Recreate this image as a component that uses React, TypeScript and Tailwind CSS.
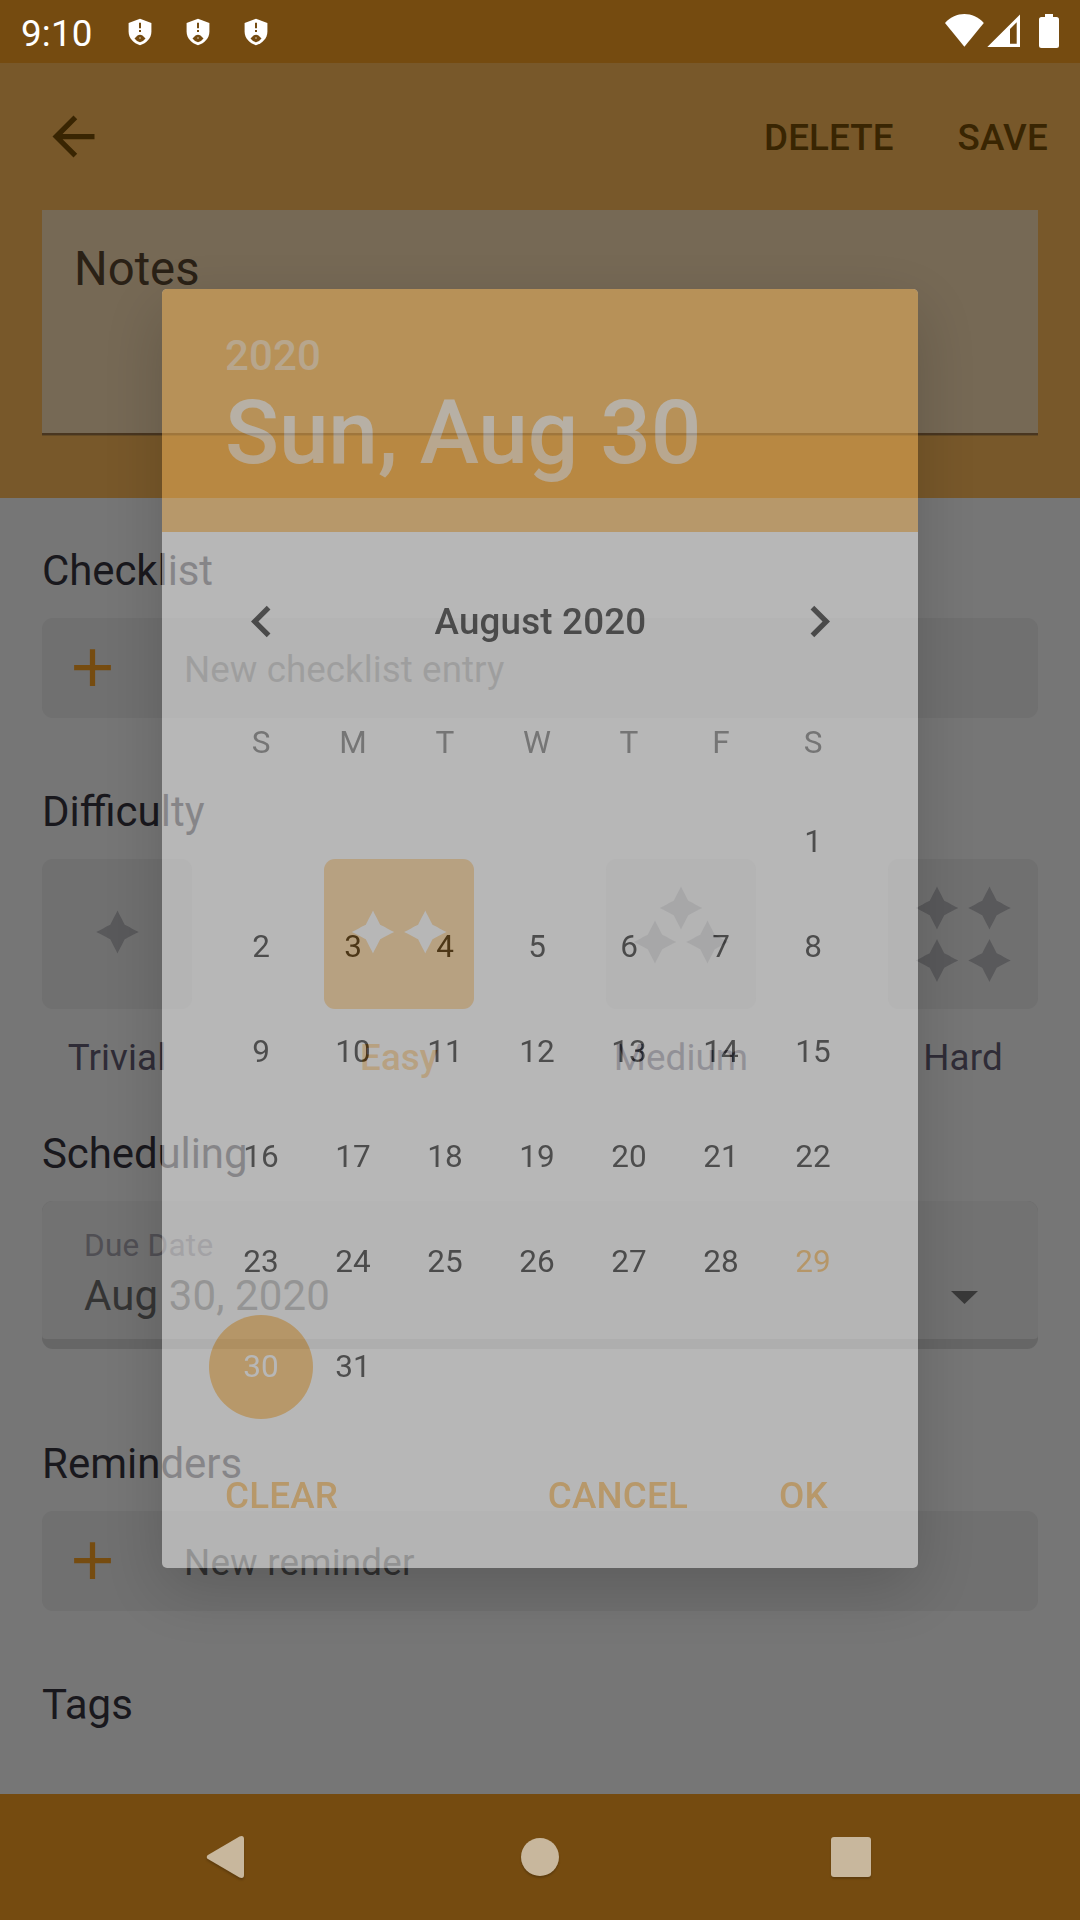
import type { ReactNode } from "react";

const STAR = "M0-21.5C1.5-18 5.5-11 7.2-7.2C11-5.5 17.5-1.6 21.2 0C17.5 1.6 11 5.5 7.2 7.2C5.5 11 1.5 18 0 21.5C-1.5 18-5.5 11-7.2 7.2C-11 5.5-17.5 1.6-21.2 0C-17.5-1.6-11-5.5-7.2-7.2C-5.5-11-1.5-18 0-21.5Z";

const difficulties = [
  { label: "Trivial", active: false, stars: [[75.5, 73]] },
  { label: "Easy", active: true, stars: [[49, 73], [101.3, 73]] },
  { label: "Medium", active: false, stars: [[75, 49], [49, 83], [101.5, 83]] },
  { label: "Hard", active: false, stars: [[49, 49], [101.5, 49], [49, 101.5], [101.5, 101.5]] },
];

const weekdays = ["S", "M", "T", "W", "T", "F", "S"];
const days: (number | null)[] = [
  ...Array.from({ length: 6 }, () => null),
  ...Array.from({ length: 31 }, (_, i) => i + 1),
];

function Shield() {
  return (
    <svg className="h-[28px] w-[24px]" viewBox="0 0 24 28">
      <path fill="#fff" d="M12 .7 23.4 5v8.8c0 6.3-4.8 11.4-11.4 13.5C5.4 25.200.6 20.100.6 13.800V5z" />
      <path fill="#754b10" d="M11 4.800h2v5.400h-2zM11 12h2v2h-2z" />
      <path fill="#754b10" d="M6.500 20.500 9.500 17.600a4.200 4.200 0 0 1 5 0l3 2.900a9 9 0 0 1-5.500 3.700 9 9 0 0 1-5.500-3.700z" />
      <circle cx="12" cy="20" r=".8" fill="#d9cbb6" />
    </svg>
  );
}

function StatusBar() {
  return (
    <div className="flex h-[63px] items-start bg-[#754b10] text-white">
      <span className="ml-[21px] mt-[12px] w-[71px] text-[36.75px] leading-[43px] tracking-[0.2px]">9:10</span>
      <div className="ml-[36px] mt-[18px] flex gap-[34px]">
        <Shield />
        <Shield />
        <Shield />
      </div>
      <svg className="ml-auto mr-[20px] mt-[12px] h-[38px] w-[116px]" viewBox="0 0 116 38" fill="#fff">
        <path d="M20.400 34.700 1 10.900C6.500 5 13.200 2 20.400 2s14 3 19.400 8.900z" />
        <path fillRule="evenodd" d="M43.300 35 76 2.500V35zM66 17v14.700h6.700V10.300z" />
        <path d="M101 2h8v3h3.500a2.500 2.500 0 0 1 2.500 2.500v26a2.500 2.500 0 0 1-2.500 2.500h-15a2.500 2.500 0 0 1-2.500-2.500v-26a2.500 2.500 0 0 1 2.500-2.500h3.500z" />
      </svg>
    </div>
  );
}

function Header() {
  return (
    <header className="h-[435px] bg-[#78582a] px-[42px] text-[#392502]">
      <div className="flex h-[147px] items-center pt-[2px]">
        <svg className="-mt-[2px] h-[63px] w-[63px]" viewBox="0 0 24 24" fill="#392502">
          <path d="M20 11H7.830l5.590-5.590L12 4l-8 8 8 8 1.410-1.410L7.830 13H20v-2z" />
        </svg>
        <span className="ml-auto text-[36.75px] font-medium leading-[43px] tracking-[0.1px]">DELETE</span>
        <span className="-mr-[10px] ml-[64px] text-[36.75px] font-medium leading-[43px] tracking-[0.2px]">SAVE</span>
      </div>
      <div className="h-[225px] border-b-2 border-[#493620] bg-[#766955] px-[32px] pt-[31px] text-[47.25px] leading-[56px] text-[#2a2116] shadow-[0_1px_0_#634a25]">
        Notes
      </div>
    </header>
  );
}

function Heading({ children, className }: { children: ReactNode; className: string }) {
  return <h2 className={`text-[42px] leading-[48px] text-[#19181d] ${className}`}>{children}</h2>;
}

function AddRow({ label, tone }: { label: string; tone: string }) {
  return (
    <div className="mt-[23px] flex h-[100px] items-center rounded-[11px] bg-[#707070]">
      <svg className="ml-[19px] -mt-[1px] h-[63px] w-[63px]" viewBox="0 0 24 24" fill="#764c10">
        <path d="M19 13h-6v6h-2v-6H5v-2h6V5h2v6h6v2z" />
      </svg>
      <span className={`ml-[60px] mt-[3px] text-[36.75px] leading-[43px] ${tone}`}>{label}</span>
    </div>
  );
}

function TaskForm() {
  return (
    <main className="flex h-[1296px] flex-col bg-[#767676] px-[42px]">
      <Heading className="mt-[49px] tracking-[-0.1px]">Checklist</Heading>
      <AddRow label="New checklist entry" tone="text-[#484848] tracking-[0.06px]" />

      <Heading className="mt-[70px]">Difficulty</Heading>
      <div className="mt-[23px] flex justify-between">
        {difficulties.map((d) => (
          <div key={d.label} className="flex w-[150px] flex-col items-center">
            <div className={`h-[150px] w-[150px] rounded-[11px] ${d.active ? "bg-[#764c10]" : "bg-[#707070]"}`}>
              <svg className="h-[150px] w-[150px]" viewBox="0 0 150 150" fill={d.active ? "#767676" : "#59595b"}>
                {d.stars.map(([x, y]) => (
                  <path key={`${x}-${y}`} d={STAR} transform={`translate(${x} ${y})`} />
                ))}
              </svg>
            </div>
            <span
              className={`mt-[27px] text-[36.75px] leading-[43px] tracking-[0.1px] ${d.active ? "font-medium text-[#764c10]" : "text-[#2f2c37]"}`}
            >
              {d.label}
            </span>
          </div>
        ))}
      </div>

      <Heading className="mt-[51px] tracking-[-0.1px]">Scheduling</Heading>
      <div className="mt-[23px] h-[148px] overflow-hidden rounded-[11px] bg-[#666666]">
        <div className="flex h-[138px] items-start justify-between rounded-b-[4px] bg-[#727272] pl-[42px] pr-[60px]">
          <div className="pt-[26px]">
            <div className="text-[31.5px] leading-[37px] text-[#504f54] tracking-[0.25px]">Due Date</div>
            <div className="mt-[8px] text-[42px] leading-[48px] text-[#343434] tracking-[0.1px]">Aug 30, 2020</div>
          </div>
          <svg className="mt-[90px] h-[13px] w-[27px]" viewBox="0 0 27 13" fill="#393939">
            <path d="M0 0h27L13.500 13z" />
          </svg>
        </div>
      </div>

      <Heading className="mt-[91px]">Reminders</Heading>
      <AddRow label="New reminder" tone="text-[#303030] tracking-[0.2px]" />

      <Heading className="mt-[70px]">Tags</Heading>
    </main>
  );
}

function NavBar() {
  return (
    <nav className="flex h-[126px] items-center bg-[#754b10] pl-[206px] pr-[209px]">
      <svg className="h-[44px] w-[40px] drop-shadow-[0_2px_1px_rgba(0,0,0,0.2)]" viewBox="0 0 40 44" fill="#c8b79d">
        <path d="M1.500 20.200 33.500 1.400Q38 0 38 4v36q0 4-4.500 2.600L1.500 23.800Q0 22 1.500 20.200z" />
      </svg>
      <div className="ml-[275px] h-[38px] w-[38px] rounded-full bg-[#c8b79d] shadow-[0_2px_2px_rgba(0,0,0,0.2)]" />
      <div className="ml-auto h-[40px] w-[40px] rounded-[3px] bg-[#c8b79d] shadow-[0_2px_2px_rgba(0,0,0,0.2)]" />
    </nav>
  );
}

function DatePicker() {
  return (
    <div
      role="dialog"
      className="absolute left-[162px] top-[289px] h-[1279px] w-[756px] rounded-[5px] bg-white text-[#212121] opacity-[0.476] shadow-[0_21px_63px_rgba(0,0,0,0.36)]"
    >
      <div className="h-[243px] rounded-t-[5px] bg-[#ffbe5d] pl-[63px] pt-[43px] font-medium">
        <div className="text-[42px] leading-[48px] text-white/70 tracking-[0.1px]">2020</div>
        <div className="mt-[1px] text-[89.25px] leading-[104px] text-white tracking-[-0.15px]">Sun, Aug 30</div>
      </div>
      <div className="mt-[58px] flex h-[63px] items-center justify-between pl-[68px] pr-[67px]">
        <svg className="h-[63px] w-[63px]" viewBox="0 0 24 24" fill="#212121">
          <path d="M15.410 7.410 14 6l-6 6 6 6 1.410-1.410L10.830 12z" />
        </svg>
        <span className="text-[36.75px] font-medium leading-[43px] tracking-[0.2px]">August 2020</span>
        <svg className="h-[63px] w-[63px]" viewBox="0 0 24 24" fill="#212121">
          <path d="M10 6 8.590 7.410 13.170 12l-4.580 4.590L10 18l6-6z" />
        </svg>
      </div>
      <div className="ml-[53px] mt-[58px] grid h-[63px] w-[644px] grid-cols-7 place-items-center text-[31.5px] text-[#757575]">
        {weekdays.map((w, i) => (
          <span key={i}>{w}</span>
        ))}
      </div>
      <div className="ml-[53px] mt-[15px] grid w-[644px] auto-rows-[105px] grid-cols-7 place-items-center text-[31.5px] leading-[37px]">
        {days.map((d, i) =>
          d === 30 ? (
            <span key={i} className="-mx-[6px] flex h-[104px] w-[104px] items-center justify-center rounded-full bg-[#ffbe5d] text-white">
              {d}
            </span>
          ) : (
            <span key={i} className={d === 29 ? "text-[#ffbe5d]" : ""}>
              {d}
            </span>
          ),
        )}
      </div>
      <div className="mt-[55px] flex pl-[63px] pr-[90px] text-[36.75px] font-medium leading-[43px] text-[#ffbe5d] tracking-[0.2px]">
        <span>CLEAR</span>
        <span className="ml-auto">CANCEL</span>
        <span className="ml-[91px]">OK</span>
      </div>
    </div>
  );
}

export default function App() {
  return (
    <div className="relative flex h-[1920px] w-[1080px] flex-col overflow-hidden font-['Roboto',sans-serif]">
      <StatusBar />
      <Header />
      <TaskForm />
      <NavBar />
      <DatePicker />
    </div>
  );
}
